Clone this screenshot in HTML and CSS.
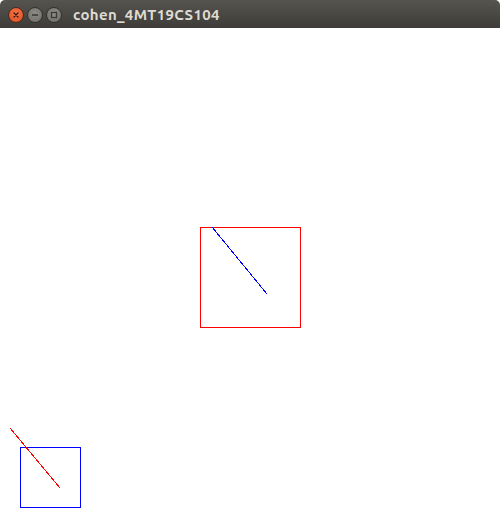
FILE: index.html
```html
<!DOCTYPE html>
<html>
<head>
<meta charset="utf-8">
<link rel="stylesheet" href="styles.css">
</head>
<body>
<div class="window">
  <div class="titlebar">
    <div class="controls">
      <span class="btn close">
        <svg width="14" height="14" viewBox="0 0 14 14"><path d="M5 5 L9 9 M9 5 L5 9" stroke="#3a1a10" stroke-width="1.4" stroke-linecap="round"/></svg>
      </span>
      <span class="btn">
        <svg width="14" height="14" viewBox="0 0 14 14"><path d="M4 7 H10" stroke="#3b3a36" stroke-width="1.6"/></svg>
      </span>
      <span class="btn">
        <svg width="14" height="14" viewBox="0 0 14 14"><rect x="4.5" y="4.5" width="5" height="5" fill="none" stroke="#3b3a36" stroke-width="1.3"/></svg>
      </span>
    </div>
    <span class="title">cohen_4MT19CS104</span>
  </div>
  <svg class="canvas" width="500" height="500" viewBox="0 28 500 500" shape-rendering="crispEdges">
    <rect x="200.5" y="227.5" width="100" height="100" fill="none" stroke="#ff0000" stroke-width="1"/>
    <line x1="212" y1="227" x2="267" y2="294" stroke="#0000ff" stroke-width="1"/>
    <rect x="20.5" y="447.5" width="60" height="60" fill="none" stroke="#0000ff" stroke-width="1"/>
    <line x1="10" y1="428" x2="60" y2="488" stroke="#ff0000" stroke-width="1"/>
  </svg>
</div>
</body>
</html>
```
FILE: styles.css
```css
html, body {
  margin: 0;
  padding: 0;
  background: #ffffff;
}
.window {
  width: 500px;
  height: 528px;
  display: flex;
  flex-direction: column;
  overflow: hidden;
}
.titlebar {
  height: 28px;
  flex: 0 0 28px;
  display: flex;
  align-items: center;
  background: linear-gradient(#55544f, #3d3c38);
  border-radius: 5px 5px 0 0;
  box-sizing: border-box;
  padding-left: 8px;
  padding-top: 1px;
}
.controls {
  display: flex;
  gap: 3px;
  align-items: center;
}
.btn {
  box-sizing: border-box;
  width: 16px;
  height: 16px;
  border-radius: 50%;
  background: radial-gradient(circle at 50% 40%, #8f8d86, #6b6a64);
  border: 1px solid #33322e;
  display: flex;
  align-items: center;
  justify-content: center;
}
.btn.close {
  background: radial-gradient(circle at 50% 40%, #f4774a, #e0481c);
  border-color: #4a2a1c;
}
.btn svg {
  display: block;
}
.title {
  margin-left: 11px;
  font-family: "Ubuntu", "DejaVu Sans", "Open Sans", sans-serif;
  font-weight: bold;
  font-size: 15px;
  letter-spacing: 0.35px;
  color: #dfdbd2;
}
.canvas {
  display: block;
  flex: 0 0 auto;
}
```
